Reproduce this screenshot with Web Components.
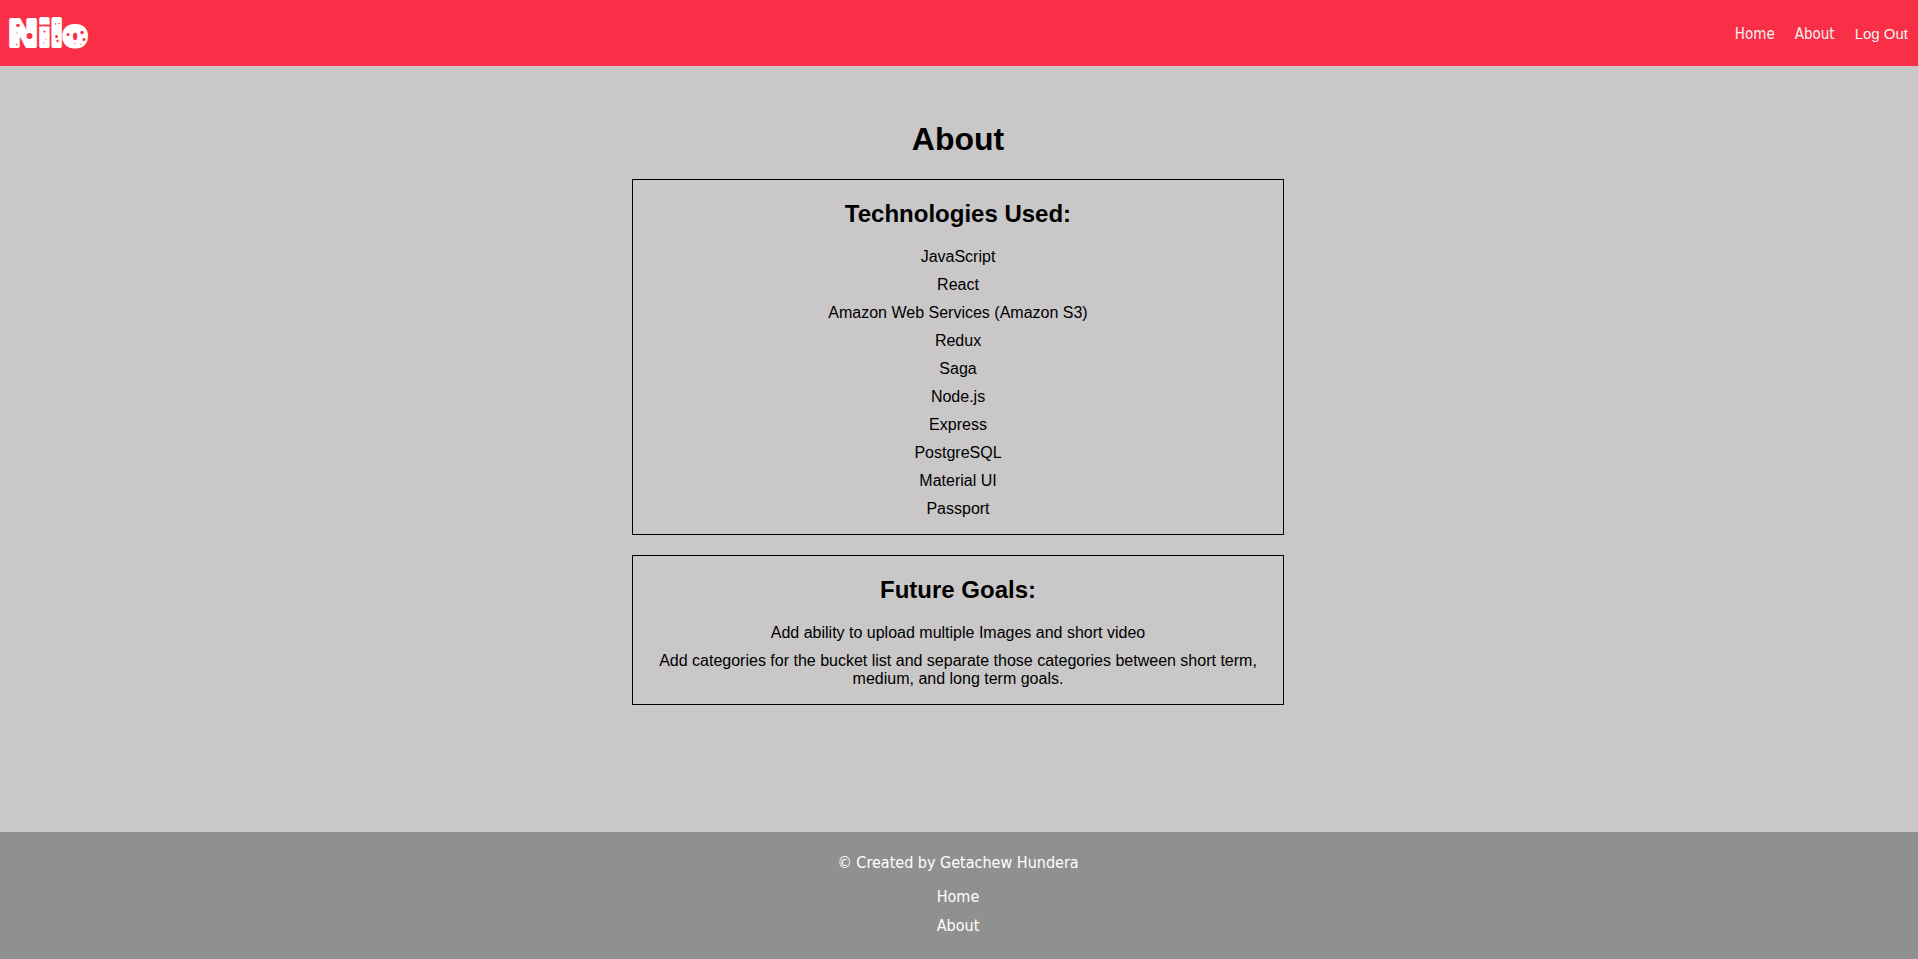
<!DOCTYPE html>
<html lang="en">
<head>
<meta charset="utf-8">
<meta name="viewport" content="width=device-width, initial-scale=1">
<title>Nilo</title>
<style>
  html { height: 100%; }
  body {
    margin: 0;
    min-height: 100%;
    display: flex;
    flex-direction: column;
    background: #c9c7c8;
    color: #000;
    font: 16px/18px "Liberation Sans", Arial, sans-serif;
  }
  about-page { flex: 1; }
</style>
</head>
<body>
<site-header></site-header>
<about-page>
  <info-card heading="Technologies Used:">
    <p>JavaScript</p>
    <p>React</p>
    <p>Amazon Web Services (Amazon S3)</p>
    <p>Redux</p>
    <p>Saga</p>
    <p>Node.js</p>
    <p>Express</p>
    <p>PostgreSQL</p>
    <p>Material UI</p>
    <p>Passport</p>
  </info-card>
  <info-card heading="Future Goals:">
    <p>Add ability to upload multiple Images and short video</p>
    <p>Add categories for the bucket list and separate those categories between short term, medium, and long term goals.</p>
  </info-card>
</about-page>
<site-footer></site-footer>

<script>
const define = (name, html, setup) => {
  const template = document.createElement('template');
  template.innerHTML = html;
  customElements.define(name, class extends HTMLElement {
    constructor() {
      super();
      this.attachShadow({ mode: 'open' }).append(template.content.cloneNode(true));
    }
    connectedCallback() {
      if (setup) setup(this, this.shadowRoot);
    }
  });
};

define('nilo-logo', `
  <style>
    :host { display: block; }
    a { display: block; }
    svg { display: block; width: 88px; height: 48px; overflow: visible; }
    text {
      font: 700 36px "DejaVu Sans", Verdana, sans-serif;
      fill: #fff; stroke: #fff; stroke-width: 4; stroke-linejoin: round;
    }
    g { fill: #f92f47; }
  </style>
  <a href="#home">
    <svg viewBox="8 9 88 48" role="img" aria-label="Nilo">
      <text x="8" y="46">Nilo</text>
      <g>
        <rect x="38" y="24.6" width="12.4" height="1.8"/>
        <ellipse cx="18" cy="25.5" rx="2" ry="1.4"/>
        <circle cx="29.5" cy="36" r="3"/>
        <circle cx="17" cy="33" r=".6"/>
        <circle cx="16.5" cy="44.5" r=".8"/>
        <circle cx="44.5" cy="31.5" r="1"/>
        <circle cx="46" cy="39" r=".6"/>
        <circle cx="43.5" cy="43" r=".6"/>
        <circle cx="55.5" cy="24" r=".7"/>
        <circle cx="59" cy="23.5" r=".7"/>
        <circle cx="56.5" cy="36.5" r="1.5"/>
        <circle cx="57.5" cy="41" r="1.2"/>
        <circle cx="68" cy="34.5" r="1.5"/>
        <circle cx="82" cy="32.5" r="1.7"/>
        <circle cx="84" cy="39.5" r="1.5"/>
        <circle cx="75" cy="43.5" r=".6"/>
        <circle cx="81" cy="44" r=".6"/>
      </g>
    </svg>
  </a>`);

define('site-header', `
  <style>
    :host {
      display: flex; align-items: center; justify-content: space-between;
      min-height: 66px; padding: 0 10px 0 8px; box-sizing: border-box;
      background: #f92f47;
    }
    nav { display: flex; align-items: baseline; gap: 20px; padding-top: 2px; }
    a, button { color: #f2f2f2; font-size: 15px; line-height: 20px; }
    a { font-family: "DejaVu Sans Condensed", Tahoma, sans-serif; text-decoration: none; }
    button {
      padding: 0; border: 0; background: none; cursor: pointer;
      font-family: "Liberation Sans", Arial, sans-serif;
    }
  </style>
  <nilo-logo></nilo-logo>
  <nav aria-label="Main">
    <a href="#home">Home</a>
    <a href="#about">About</a>
    <button type="button">Log Out</button>
  </nav>`);

define('about-page', `
  <style>
    :host { display: block; padding: 53px 2px 64px 0; }
    main { width: 34%; margin: 0 auto; display: grid; gap: 20px; }
    h1 { margin: 0; font-size: 32px; line-height: 40px; text-align: center; }
  </style>
  <main>
    <h1>About</h1>
    <slot></slot>
  </main>`);

define('info-card', `
  <style>
    :host {
      display: block; border: 1px solid #000; padding: 20px 24px 16px;
      text-align: center;
    }
    h2 { margin: 0 0 20px; font-size: 24px; line-height: 28px; }
    div { display: grid; gap: 10px; }
    ::slotted(p) { margin: 0; }
  </style>
  <section>
    <h2></h2>
    <div><slot></slot></div>
  </section>`, (host, root) => {
  root.querySelector('h2').textContent = host.getAttribute('heading');
});

define('site-footer', `
  <style>
    :host {
      display: flex; flex-direction: column; align-items: center;
      box-sizing: border-box; padding: 21px 2px 23px 0;
      background: #909090; color: #fff;
      font: 16px/20px "DejaVu Sans Condensed", Tahoma, sans-serif;
    }
    p { margin: 0 0 14px; }
    nav { display: grid; gap: 9px; text-align: center; }
    a { color: inherit; text-decoration: none; }
  </style>
  <p>© Created by Getachew Hundera</p>
  <nav aria-label="Footer">
    <a href="#home">Home</a>
    <a href="#about">About</a>
  </nav>`);
</script>
</body>
</html>
